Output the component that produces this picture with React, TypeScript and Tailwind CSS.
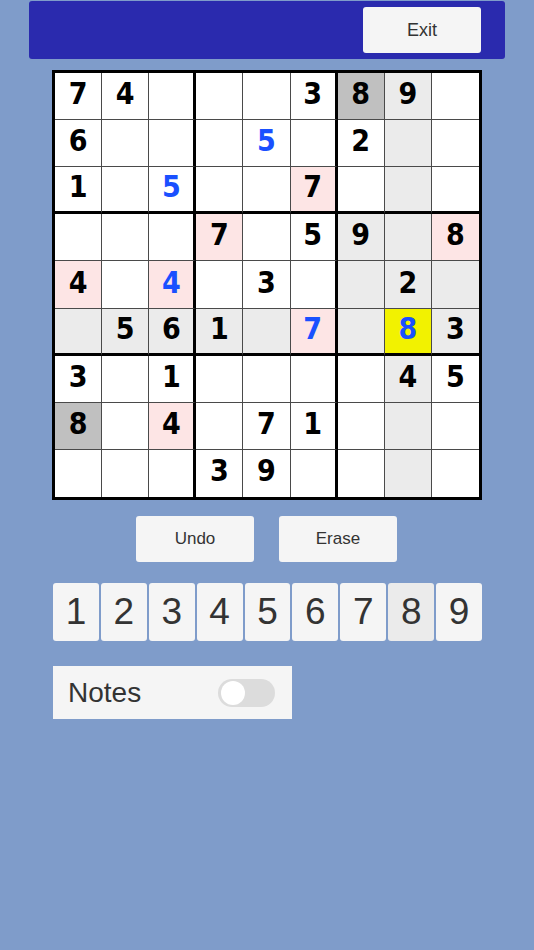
import React from 'react';

type Cell = { v?: number; blue?: boolean; bg?: 'pink' | 'light' | 'dark' | 'sel' };

// board as drawn: value, user-entered (blue), and highlight
const board: Cell[][] = [
  [{ v: 7 }, { v: 4 }, {}, {}, {}, { v: 3 }, { v: 8, bg: 'dark' }, { v: 9, bg: 'light' }, {}],
  [{ v: 6 }, {}, {}, {}, { v: 5, blue: true }, {}, { v: 2 }, { bg: 'light' }, {}],
  [{ v: 1 }, {}, { v: 5, blue: true }, {}, {}, { v: 7, bg: 'pink' }, {}, { bg: 'light' }, {}],
  [{}, {}, {}, { v: 7, bg: 'pink' }, {}, { v: 5 }, { v: 9, bg: 'light' }, { bg: 'light' }, { v: 8, bg: 'pink' }],
  [{ v: 4, bg: 'pink' }, {}, { v: 4, blue: true, bg: 'pink' }, {}, { v: 3 }, {}, { bg: 'light' }, { v: 2, bg: 'light' }, { bg: 'light' }],
  [
    { bg: 'light' }, { v: 5, bg: 'light' }, { v: 6, bg: 'light' }, { v: 1, bg: 'light' }, { bg: 'light' },
    { v: 7, blue: true, bg: 'pink' }, { bg: 'light' }, { v: 8, blue: true, bg: 'sel' }, { v: 3, bg: 'light' },
  ],
  [{ v: 3 }, {}, { v: 1 }, {}, {}, {}, {}, { v: 4, bg: 'light' }, { v: 5 }],
  [{ v: 8, bg: 'dark' }, {}, { v: 4, bg: 'pink' }, {}, { v: 7 }, { v: 1 }, {}, { bg: 'light' }, {}],
  [{}, {}, {}, { v: 3 }, { v: 9 }, {}, {}, { bg: 'light' }, {}],
];

const bgClass = {
  pink: 'bg-[#fde5e5]',
  light: 'bg-[#ebebeb]',
  dark: 'bg-[#c0c0c0]',
  sel: 'bg-[#f2f200]',
};

export default function App() {
  return (
    <div className="min-h-[950px] w-[534px] bg-[#7f9cca] font-['Liberation_Sans',sans-serif]">
      <div className="pt-px px-[29px]">
        <div className="flex h-[58px] justify-end rounded-[3px] bg-[#2a2aae] pr-6 pt-1.5">
          <button className="h-[46px] w-[118px] rounded-[3px] bg-[#f5f5f5] text-[18px] text-[#333]">Exit</button>
        </div>
      </div>

      <div className="ml-[52px] mt-[11px] grid h-[430px] w-[430px] grid-cols-9 grid-rows-9 border-[3px] border-black bg-white font-['DejaVu_Sans_Condensed','DejaVu_Sans',sans-serif]">
        {board.map((row, r) =>
          row.map((c, ci) => {
            const right = ci === 8 ? 'border-r-0' : ci === 2 || ci === 5 ? 'border-r-[3px] border-r-black' : 'border-r border-r-[#4a4a4a]';
            const bottom = r === 8 ? 'border-b-0' : r === 2 || r === 5 ? 'border-b-[3px] border-b-black' : 'border-b border-b-[#4a4a4a]';
            return (
              <div
                key={`${r}-${ci}`}
                className={`flex items-center justify-center pb-[5px] text-[30px] font-bold ${right} ${bottom} ${c.bg ? bgClass[c.bg] : 'bg-white'} ${c.blue ? 'text-[#1a50ff]' : 'text-black'}`}
              >
                {c.v ?? ''}
              </div>
            );
          })
        )}
      </div>

      <div className="mt-4 flex justify-center gap-[25px] pr-px">
        <button className="h-[46px] w-[118px] rounded-[3px] bg-[#f5f5f5] text-[17px] text-[#333]">Undo</button>
        <button className="h-[46px] w-[118px] rounded-[3px] bg-[#f5f5f5] text-[17px] text-[#333]">Erase</button>
      </div>

      <div className="ml-[53px] mt-[21px] grid w-[429px] grid-cols-9 gap-[2px]">
        {[1, 2, 3, 4, 5, 6, 7, 8, 9].map((n) => (
          <button
            key={n}
            className={`h-[58px] rounded-[3px] text-[37px] text-[#333] ${n === 8 ? 'bg-[#ebebeb]' : 'bg-[#f5f5f5]'}`}
          >
            {n}
          </button>
        ))}
      </div>

      <div className="ml-[53px] mt-[25px] flex h-[53px] w-[239px] items-center justify-between bg-[#f5f5f5] pl-[15px] pr-[17px]">
        <span className="text-[28px] text-[#333]">Notes</span>
        <div className="flex h-[28px] w-[57px] items-center rounded-full bg-[#dcdcdc] px-[3px]">
          <div className="h-[24px] w-[24px] rounded-full bg-white" />
        </div>
      </div>
    </div>
  );
}
